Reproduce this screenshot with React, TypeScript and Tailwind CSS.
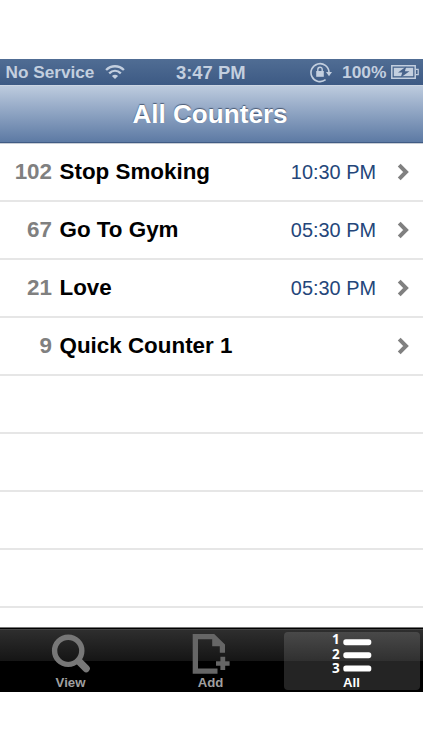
type Counter = { count: number; name: string; time?: string }

const counters: Counter[] = [
  { count: 102, name: 'Stop Smoking', time: '10:30 PM' },
  { count: 67, name: 'Go To Gym', time: '05:30 PM' },
  { count: 21, name: 'Love', time: '05:30 PM' },
  { count: 9, name: 'Quick Counter 1' },
]

const emptyRows = 4

function WifiIcon() {
  return (
    <svg width="20" height="16" viewBox="0 0 22 17" fill="none" stroke="#c3cfdf" strokeWidth="2.6">
      <path d="M1.2 6.3C6.8.8 15.2.8 20.8 6.3" />
      <path d="M4.6 9.9c3.8-3.6 9-3.6 12.8 0" />
      <path d="M7.6 12.8c2-1.8 4.8-1.8 6.8 0L11 16.2z" fill="#c3cfdf" stroke="none" />
    </svg>
  )
}

function RotationLockIcon() {
  return (
    <svg width="23" height="21" viewBox="0 0 23 21" fill="none" stroke="#c3cfdf">
      <path d="M15.6 17.7A9 9 0 1 1 19 10.2" strokeWidth="1.6" />
      <path d="M16 10h6l-3 4.2z" fill="#c3cfdf" stroke="none" />
      <path d="M6.2 9h7.6v5.8H6.2z" fill="#c3cfdf" stroke="none" />
      <path d="M7.8 9.5V7.4a2.2 2.2 0 0 1 4.4 0v2.1" strokeWidth="1.4" />
    </svg>
  )
}

function BatteryIcon() {
  return (
    <svg width="28" height="14" viewBox="0 0 28 14">
      <path d="M.8.8h23.4v12.4H.8z" fill="none" stroke="#c3cfdf" strokeWidth="1.5" />
      <path d="M2.8 2.8h19.4v8.4H2.8z" fill="#c3cfdf" />
      <path d="M25 4.4h2.2v5.2H25" fill="none" stroke="#c3cfdf" strokeWidth="1.2" />
      <path d="M15.3 1.6 7 7.6h4.3l-1.6 4.8 8.8-6.2h-4.6z" fill="#47628a" />
    </svg>
  )
}

function Chevron() {
  return (
    <svg width="13" height="18" viewBox="0 0 13 18" fill="none" stroke="#808080" strokeWidth="4">
      <path d="M2.2 2.2 9 9l-6.8 6.8" />
    </svg>
  )
}

function SearchIcon() {
  return (
    <svg width="40" height="40" viewBox="0 0 40 40" fill="none" stroke="#777">
      <circle cx="17.2" cy="16.8" r="13.6" strokeWidth="5.4" />
      <path d="m28 27.4 7.2 7.2" strokeWidth="7.2" strokeLinecap="round" />
    </svg>
  )
}

function AddIcon() {
  return (
    <svg width="40" height="40" viewBox="0 0 40 40" fill="#666">
      <path d="M1.7 0h21.5L34 10.4v8.3h-5.2v-6.5h-7.6V5.2H7v29.3h19.5v5.2H1.7z" />
      <path d="M29.4 22.8h4.8v4.4h4.4v4.5h-4.4V36h-4.8v-4.3H25v-4.5h4.4z" />
    </svg>
  )
}

function ListIcon() {
  return (
    <div className="flex h-[42px] w-[40px] justify-between">
      <div className="flex flex-col font-['Open_Sans',sans-serif] text-[13.5px] leading-[14.6px] font-bold">
        <span>1</span>
        <span>2</span>
        <span>3</span>
      </div>
      <svg width="29" height="42" viewBox="0 0 29 42" fill="#fff">
        <rect x=".3" y="7.2" width="28" height="6" rx="2.6" />
        <rect x=".3" y="20.2" width="28" height="6" rx="2.6" />
        <rect x=".3" y="33.5" width="28" height="6" rx="2.6" />
      </svg>
    </div>
  )
}

function StatusBar() {
  return (
    <div className="flex h-[26px] items-center bg-linear-to-b from-[#506d94] to-[#3d5a84] text-[17.4px] font-bold text-[#c3cfdf]">
      <span className="ml-[5.5px] w-[99.5px] pt-px text-[17.2px] whitespace-nowrap">No Service</span>
      <WifiIcon />
      <span className="ml-[51px] w-[134px] pt-px text-[18.4px] whitespace-nowrap">3:47 PM</span>
      <RotationLockIcon />
      <span className="ml-[9px] w-[49px] pt-px">100%</span>
      <BatteryIcon />
    </div>
  )
}

function CounterRow({ count, name, time }: Counter) {
  return (
    <li className="flex h-[58px] items-center border-b-2 border-[#e6e6e6] pr-[13px] text-[22.4px] font-bold">
      <span className="w-[52px] text-right text-[#808080]">{count}</span>
      <span className="ml-[7.5px] flex-1 text-black">{name}</span>
      {time && <span className="mr-[21px] pt-[2px] text-[19.9px] font-normal text-[#24467a]">{time}</span>}
      <Chevron />
    </li>
  )
}

function TabBar() {
  return (
    <nav className="grid h-[65px] grid-cols-3 border-t border-[#777] bg-[linear-gradient(#000_0_1px,#454545_1px_2px,#2e2e2e_2px,#151515_33px,#000_33px)] text-[13.2px] leading-[15px] font-bold text-[#a0a0a0]">
      <div className="flex flex-col items-center pt-[6px]">
        <SearchIcon />
        <span className="mt-[1px]">View</span>
      </div>
      <div className="flex flex-col items-center pt-[6px] pr-px">
        <AddIcon />
        <span className="mt-[1px] pr-px">Add</span>
      </div>
      <div className="mt-[4px] mr-[3px] mb-[2px] ml-[2px] flex flex-col items-center rounded-[4px] bg-[linear-gradient(#494949,#303030_29px,#242424_29px)] text-white">
        <ListIcon />
        <span className="mt-[1px] pr-px">All</span>
      </div>
    </nav>
  )
}

export default function App() {
  return (
    <div className="flex h-[750px] w-[423px] flex-col bg-white pt-[59px] font-['Liberation_Sans',Arial,sans-serif]">
      <StatusBar />
      <header className="flex h-[58px] items-center justify-center border-y border-t-[#cbd5e3] border-b-[#405b84] bg-linear-to-b from-[#bdcbde] to-[#5d7aa4] pt-[2px] pr-[3px]">
        <h1 className="text-[26.1px] font-bold text-white [text-shadow:0_-1px_1px_rgba(30,45,70,0.65)]">All Counters</h1>
      </header>
      <ul className="h-[484px] overflow-hidden border-t border-[#c9ced6]">
        {counters.map((counter) => (
          <CounterRow key={counter.name} {...counter} />
        ))}
        {Array.from({ length: emptyRows }, (_, i) => (
          <li key={i} className="h-[58px] border-b-2 border-[#e6e6e6]" />
        ))}
      </ul>
      <TabBar />
    </div>
  )
}
